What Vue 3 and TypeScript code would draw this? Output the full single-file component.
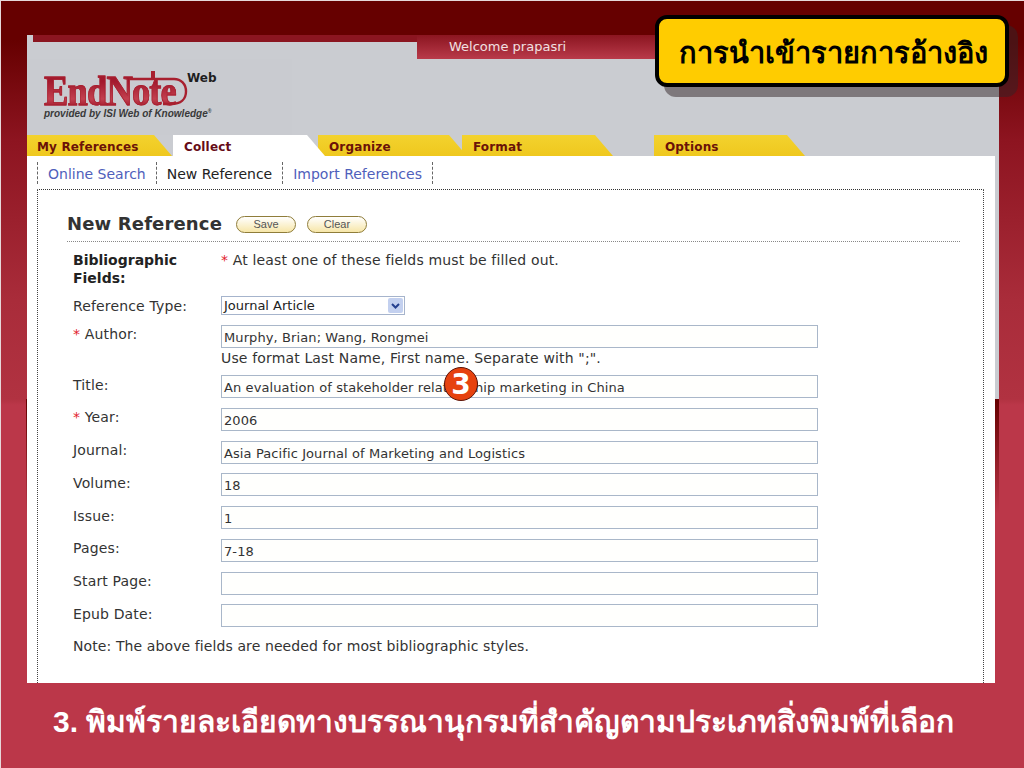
<script setup lang="ts">
interface Field {
  label: string
  value: string
  required?: boolean
  hint?: string
}

const subTabs = [
  { label: 'Online Search', active: false },
  { label: 'New Reference', active: true },
  { label: 'Import References', active: false },
]

// step = distance to the next tab, shape = drawn width (they overlap a bit)
const tabs = [
  { label: 'My References', step: 146, shape: 145, active: false },
  { label: 'Collect', step: 145, shape: 152, active: true },
  { label: 'Organize', step: 144, shape: 149, active: false },
  { label: 'Format', step: 192, shape: 151, active: false },
  { label: 'Options', step: 150, shape: 151, active: false },
]

const fields: Field[] = [
  { label: 'Author:', value: 'Murphy, Brian; Wang, Rongmei', required: true, hint: 'Use format Last Name, First name. Separate with ";".' },
  { label: 'Title:', value: 'An evaluation of stakeholder relationship marketing in China' },
  { label: 'Year:', value: '2006', required: true },
  { label: 'Journal:', value: 'Asia Pacific Journal of Marketing and Logistics' },
  { label: 'Volume:', value: '18' },
  { label: 'Issue:', value: '1' },
  { label: 'Pages:', value: '7-18' },
  { label: 'Start Page:', value: '' },
  { label: 'Epub Date:', value: '' },
]
</script>

<template>
  <div class="slide">
    <div class="shot">
      <div class="welcome-row">
        <div class="welcome">Welcome prapasri</div>
      </div>
      <div class="logo-row">
        <div class="logo">
          <div class="logo-mark">
            <span class="logo-name">EndNote</span>
            <svg class="logo-swoosh" width="60" height="38" viewBox="0 0 60 38">
              <path d="M1 10H45c7 0 12 5 12 12.5S52 35 42 35H34" fill="none" stroke="#a8202f" stroke-width="2.4" />
              <path d="M24 2V10" fill="none" stroke="#a8202f" stroke-width="4" />
            </svg>
            <span class="logo-web">Web</span>
          </div>
          <div class="logo-sub">provided by ISI Web of Knowledge<sup>®</sup></div>
        </div>
      </div>
      <nav class="tabs">
        <div
          v-for="tab in tabs"
          :key="tab.label"
          class="tab"
          :class="{ active: tab.active }"
          :style="{ width: tab.step + 'px' }"
        >
          <span class="tab-shape" :style="{ width: tab.shape + 'px' }">
            <span class="tab-label">{{ tab.label }}</span>
          </span>
        </div>
      </nav>
      <div class="page">
        <div class="subtabs">
          <span
            v-for="sub in subTabs"
            :key="sub.label"
            class="subtab"
            :class="{ active: sub.active }"
          >{{ sub.label }}</span>
        </div>
        <div class="panel">
          <div class="heading">
            <h1>New Reference</h1>
            <span class="pill">Save</span>
            <span class="pill">Clear</span>
          </div>
          <div class="form">
            <div class="row intro">
              <div class="label strong">Bibliographic Fields:</div>
              <div class="value"><span class="star">*</span> At least one of these fields must be filled out.</div>
            </div>
            <div class="row type">
              <div class="label">Reference Type:</div>
              <div class="value">
                <div class="select">
                  <span>Journal Article</span>
                  <span class="select-btn">
                    <svg width="9" height="6" viewBox="0 0 9 6"><path d="M1 1l3.5 3.5L8 1" fill="none" stroke="#25408f" stroke-width="2" /></svg>
                  </span>
                </div>
              </div>
            </div>
            <div v-for="field in fields" :key="field.label" class="row field">
              <div class="label"><span v-if="field.required" class="star">* </span>{{ field.label }}</div>
              <div class="value">
                <div class="input">{{ field.value }}</div>
                <div v-if="field.hint" class="hint">{{ field.hint }}</div>
              </div>
            </div>
            <p class="note">Note: The above fields are needed for most bibliographic styles.</p>
          </div>
        </div>
      </div>
      <div class="badge">3</div>
    </div>
    <div class="edge edge-left"></div>
    <div class="edge edge-right"></div>
    <div class="callout">การนำเข้ารายการอ้างอิง</div>
    <div class="caption">3. พิมพ์รายละเอียดทางบรรณานุกรมที่สำคัญตามประเภทสิ่งพิมพ์ที่เลือก</div>
  </div>
</template>

<style>
html, body {
  margin: 0;
  background: #bb3749;
}
</style>

<style scoped>
.slide {
  position: relative;
  width: 1024px;
  height: 768px;
  overflow: hidden;
  box-sizing: border-box;
  padding: 35px 25px 0 27px;
  background: linear-gradient(to bottom, #660000 0, #660000 40px, #8d1420 140px, #a92c3a 300px, #b13241 399px, #bb3749 405px, #bb3749 100%);
  box-shadow: inset 1px 1px 0 #e6d8da;
  font-family: "DejaVu Sans", Verdana, sans-serif;
  color: #333;
}

.shot {
  position: relative;
  height: 648px;
  background: #caccd1;
  overflow: hidden;
}

/* dark leftovers beside the white page, they fade into the slide colour */
.edge {
  position: absolute;
  top: 399px;
  background: linear-gradient(to bottom, #660000, #bb3749);
}

.edge-left {
  left: 26px;
  width: 1px;
  height: 115px;
}

.edge-right {
  left: 995px;
  width: 4px;
  height: 284px;
  background: linear-gradient(to bottom, #660000 0, #bb3749 115px, #bb3749 100%);
}

.welcome-row {
  height: 24px;
  margin-left: 6px;
  padding-left: 384px;
  background: linear-gradient(to bottom, #8b1520 0, #8b1520 7px, transparent 7px);
  display: flex;
}

.welcome {
  flex: 1;
  height: 24px;
  box-sizing: border-box;
  padding: 4px 0 0 32px;
  background: linear-gradient(to bottom, #8b1520, #b93a4a);
  color: #f1e0e2;
  font-size: 13px;
  line-height: 16px;
}

.logo-row {
  height: 76px;
  display: flex;
}

.logo {
  width: 265px;
  padding: 10px 0 0 17px;
  box-sizing: border-box;
  background: #c9cbd0;
}

.logo-mark {
  position: relative;
  height: 38px;
}

.logo-name {
  position: absolute;
  left: 0;
  top: 6px;
  font-family: "Liberation Serif", serif;
  font-weight: 700;
  font-size: 42px;
  line-height: 32px;
  letter-spacing: -1px;
  color: transparent;
  background: linear-gradient(to bottom, #a3192d 20%, #c2404f 75%, #a3192d);
  -webkit-background-clip: text;
  background-clip: text;
  -webkit-text-stroke: 0.8px #a8202f;
  transform: scaleX(0.87);
  transform-origin: left top;
}

.logo-swoosh {
  position: absolute;
  left: 85px;
  top: 0;
}

.logo-web {
  position: absolute;
  left: 143px;
  top: 2px;
  font-size: 12px;
  font-weight: 700;
  line-height: 14px;
  color: #1e1e1e;
}

.logo-sub {
  margin-top: 1px;
  font-family: "Liberation Sans", sans-serif;
  font-size: 10px;
  font-style: italic;
  font-weight: 700;
  line-height: 11px;
  color: #3a3a3a;
}

.logo-sub sup {
  font-size: 5px;
  line-height: 0;
}

.tabs {
  display: flex;
  height: 21px;
}

.tab {
  flex: none;
  height: 21px;
  position: relative;
}

.tab.active {
  z-index: 1;
}

.tab-shape {
  display: block;
  height: 21px;
  position: relative;
  background: linear-gradient(to bottom, #f3d22e, #efc81e);
  clip-path: polygon(0 0, calc(100% - 18px) 0, 100% 100%, 0 100%);
}

.tab.active .tab-shape {
  background: #fff;
}

.tab-label {
  position: absolute;
  left: 11px;
  top: 4px;
  font-size: 12px;
  letter-spacing: 0.15px;
  line-height: 16px;
  font-weight: 700;
  color: #6b1208;
  white-space: nowrap;
}

.tab:first-child .tab-label {
  left: 10px;
}

.tab.active .tab-label {
  color: #660c18;
}

.page {
  height: 527px;
  width: 968px;
  background: #fff;
  padding: 6px 10px 0;
  box-sizing: border-box;
}

.subtabs {
  display: flex;
  height: 22px;
  border-left: 1px dashed #666;
}

.subtab {
  padding: 0 10px;
  border-right: 1px dashed #666;
  color: #4f60bb;
  font-size: 14px;
  line-height: 24px;
}

.subtab.active {
  color: #222;
}

.panel {
  margin-top: 5px;
  height: 500px;
  border-top: 1px dotted #333;
  border-left: 1px dotted #444;
  border-right: 1px dotted #444;
  padding: 0 23px 0 29px;
  box-sizing: border-box;
  width: 947px;
}

.heading {
  display: flex;
  align-items: center;
  gap: 11px;
  height: 52px;
  padding-top: 17px;
  box-sizing: border-box;
  border-bottom: 1px dotted #888;
}

.heading h1 {
  margin: 0 3px 0 0;
  font-size: 18px;
  letter-spacing: 0.15px;
  font-weight: 700;
  color: #333;
  line-height: 20px;
}

.pill {
  width: 60px;
  height: 17px;
  box-sizing: border-box;
  border: 1px solid #8f7d3a;
  border-radius: 9px;
  background: linear-gradient(to bottom, #fff, #f7e6a8);
  text-align: center;
  font-family: "Liberation Sans", sans-serif;
  font-size: 11px;
  line-height: 15px;
  color: #555;
}

.form {
  padding-left: 6px;
}

.row {
  display: flex;
}

.label {
  width: 148px;
  flex: none;
  font-size: 14px;
  letter-spacing: 0.15px;
  line-height: 18px;
}

.field .label {
  padding-top: 0.4px;
}

.type .label {
  padding-top: 1px;
}

.label.strong {
  font-weight: 700;
  letter-spacing: 0;
  width: 120px;
  margin-right: 28px;
  color: #222;
}

.value {
  flex: 1;
  font-size: 14px;
  letter-spacing: 0.15px;
  line-height: 18px;
}

.star {
  color: #e2202c;
}

.intro {
  padding-top: 9px;
  height: 54px;
  box-sizing: border-box;
}

.type {
  height: 29px;
}

.select {
  width: 184px;
  height: 19px;
  box-sizing: border-box;
  border: 1px solid #a6b4cc;
  padding-left: 2px;
  display: flex;
  align-items: center;
  justify-content: space-between;
  font-size: 13px;
  letter-spacing: 0;
  color: #222;
}

.select-btn {
  width: 15px;
  height: 15px;
  margin-right: 1px;
  background: #c3d0ef;
  border-radius: 2px;
  display: flex;
  align-items: center;
  justify-content: center;
}

.field {
  margin-bottom: 9.7px;
}

.input {
  width: 597px;
  height: 23px;
  box-sizing: border-box;
  border: 1px solid #a9b7c9;
  padding-left: 2px;
  background: #fffffd;
  font-size: 13px;
  letter-spacing: 0.1px;
  line-height: 24px;
  color: #333;
}

.hint {
  line-height: 18px;
  margin-top: 1px;
  margin-bottom: -1.3px;
}

.note {
  margin: 0;
  font-size: 14px;
  letter-spacing: 0.1px;
  line-height: 18px;
}

.badge {
  position: absolute;
  left: 417px;
  top: 332px;
  width: 34px;
  height: 34px;
  box-sizing: border-box;
  border: 1px solid #5a1408;
  border-radius: 50%;
  background: #e6420f;
  color: #fff;
  font-size: 28px;
  font-weight: 700;
  line-height: 33px;
  text-align: center;
}

.callout {
  position: absolute;
  left: 655px;
  top: 15px;
  width: 354px;
  height: 72px;
  box-sizing: border-box;
  padding-left: 20px;
  border: 4px solid #000;
  border-radius: 12px;
  background: #ffcc00;
  box-shadow: 9px 10px 0 rgba(50, 35, 40, 0.5);
  color: #000;
  font-family: "Liberation Sans", "Noto Sans", sans-serif;
  font-size: 29px;
  font-weight: 700;
  line-height: 68px;
  white-space: nowrap;
}

.caption {
  position: absolute;
  left: 53px;
  top: 700px;
  color: #fff;
  font-family: "Liberation Sans", "Noto Sans", sans-serif;
  font-size: 30px;
  font-weight: 700;
  line-height: 44px;
  white-space: nowrap;
}
</style>
